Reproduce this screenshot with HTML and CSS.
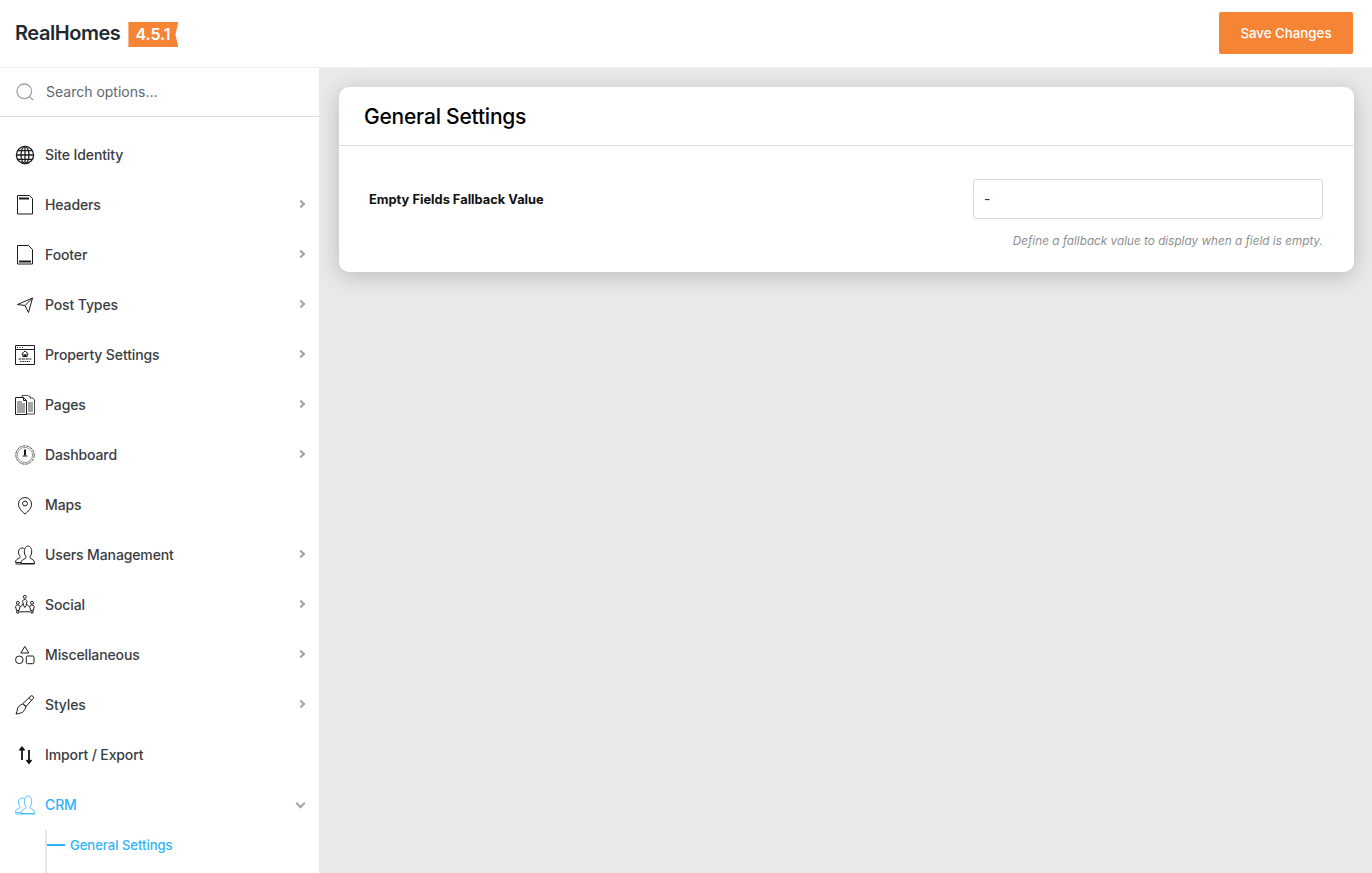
FILE: index.html
```html
<!DOCTYPE html>
<html lang="en">
<head>
<meta charset="utf-8">
<title>RealHomes Options</title>
<link rel="stylesheet" href="styles.css">
</head>
<body>
<header class="topbar">
  <div class="brand">
    <span class="brand-name">RealHomes</span>
    <span class="version">4.5.1</span>
  </div>
  <button class="save" type="button">Save Changes</button>
</header>
<div class="shell">
  <aside class="sidebar">
    <div class="search">
      <svg class="search-icon" viewBox="0 0 18 18"><circle cx="8.3" cy="8.3" r="7.3"/><path d="M13.6 13.6 17 17"/></svg>
      <span class="search-text">Search options...</span>
    </div>
    <nav class="menu">
      <a class="item"><svg class="ico globe" viewBox="0 0 20 20"><circle cx="10" cy="10" r="8.6"/><ellipse cx="10" cy="10" rx="4" ry="8.6"/><path d="M10 1.400v17.200M1.400 10h17.200M2.600 5.600h14.800M2.600 14.400h14.800"/></svg><span>Site Identity</span></a>
      <a class="item"><svg class="ico" viewBox="0 0 20 20"><path d="M2.500 .5h12l3 3v15.500h-15z"/><path class="thick" d="M4 3.500h10"/></svg><span>Headers</span><i class="chev"></i></a>
      <a class="item"><svg class="ico" viewBox="0 0 20 20"><path d="M2.500 .5h11l4 4v14.500h-15z"/><path class="thick" d="M4 16.500h12"/></svg><span>Footer</span><i class="chev"></i></a>
      <a class="item"><svg class="ico" viewBox="0 0 20 20"><path d="M2.500 9.500 17.500 3l-4 14.500-3.500-7zM10 10.500 17.500 3"/></svg><span>Post Types</span><i class="chev"></i></a>
      <a class="item"><svg class="ico" viewBox="0 0 20 20"><path d="M.5 .5h19v19H.5zM.5 4.500h19"/><path d="M2 2.500h1M4.500 2.500h1M7 2.500h1"/><path d="M10 6 6.800 8.800h1v2.700h4.400V8.800h1z"/><path class="thick" d="M8.500 10.300h3"/><path d="M3.500 14h13" stroke-dasharray="3 .6"/><path d="M5 16.500h10" stroke-dasharray="1.500 .8"/></svg><span>Property Settings</span><i class="chev"></i></a>
      <a class="item"><svg class="ico" viewBox="0 0 20 20"><path d="M7 2.500V.5h6l2 2M15 .5V3h3l1.500 2v14H8v-1.500" class="thin"/><path d="M.5 2.500h8l3 3v14H.5z" fill="#fff"/><path d="M8.500 2.500v3h3"/><path class="thin" d="M2 7h5M2 9h8M2 11h8M2 13h8M2 15h8M2 17h8M13 8h5M13 10h5M13 12h5M13 14h5M13 16h5"/></svg><span>Pages</span><i class="chev"></i></a>
      <a class="item"><svg class="ico" viewBox="0 0 20 20"><circle cx="10" cy="10" r="9.200" stroke-dasharray="3 .7" stroke="#555"/><circle cx="10" cy="10" r="7.600" stroke-opacity=".45"/><path class="thick" d="M10 4.500v6"/><path d="M7.500 11h5"/></svg><span>Dashboard</span><i class="chev"></i></a>
      <a class="item"><svg class="ico" viewBox="0 0 20 20"><path d="M10 19c-3-2.500-6.500-5.500-6.500-10a6.500 6.500 0 0 1 13 0c0 4.500-3.500 7.500-6.500 10z"/><circle cx="10" cy="8.500" r="2.400"/></svg><span>Maps</span></a>
      <a class="item"><svg class="ico wide" viewBox="0 0 20 20"><path d="M6 17.500H.5c0-3 2.200-3.500 4-4.500.9-.5.800-1.500.2-2.200C3.800 9.800 3.500 8.500 3.500 7 3.500 4.500 5 3 7.200 3c1 0 1.800.3 2.400.9"/><path d="M19.500 19H.5M19.500 18.500H6c0-3.500 2.500-4.200 4.300-5 1-.5.900-1.600.3-2.500-.9-1-1.300-2.500-1.300-4C9.300 3.500 10.800 1 13 1s3.700 2.500 3.700 6c0 1.500-.4 3-1.300 4-.6.900-.7 2 .3 2.500 1.800.8 3.800 1.500 3.800 5z"/></svg><span>Users Management</span><i class="chev"></i></a>
      <a class="item"><svg class="ico wide" viewBox="0 0 20 20"><circle cx="9.800" cy="1.800" r="1.500"/><path d="M9.800 4.500c-1.300 0-2.200.8-2.200 2l1 4 1.200 2 1.200-2 1-4c0-1.200-.9-2-2.200-2z"/><circle cx="2.800" cy="7.800" r="1.500"/><circle cx="17" cy="7.800" r="1.500"/><path d="M2.800 10c-1.300 0-2.200.8-2.200 2l1 3.500h2.400l1-3.500c0-1.200-.9-2-2.200-2zM17 10c-1.300 0-2.200.8-2.200 2l1 3.500h2.400l1-3.500c0-1.200-.9-2-2.200-2z"/><path d="M1.800 15.500v2.500h2v-2.500M16 15.500v2.500h2v-2.500M4.500 16.800h10.500M5.500 12l2.500-3M14.500 12 11.500 9"/></svg><span>Social</span><i class="chev"></i></a>
      <a class="item"><svg class="ico wide" viewBox="0 0 20 20"><path d="M9.800 1.500 13.800 8H5.800z"/><circle cx="4.300" cy="14.800" r="3.800"/><rect x="11.300" y="11" width="7.700" height="7.700" rx="1.200"/></svg><span>Miscellaneous</span><i class="chev"></i></a>
      <a class="item"><svg class="ico wide" viewBox="0 0 20 20"><path d="M8 8.500 16 .8c1-.6 3.200 1 2.500 2.300L11 11.500z"/><path d="M7.500 9c-2.500 1-4.500 2.500-5 5-.3 1.500-.8 3.500-1.500 5 3-.4 6.500-1 8-3.200.8-1.200 1.800-2.900 2-4.300z"/><path d="M14 2.800l2.500 2.500"/></svg><span>Styles</span><i class="chev"></i></a>
      <a class="item"><svg class="ico bold" viewBox="0 0 20 20"><path d="M7 15V2.500M4.500 5.500 7 2.500l2.500 3M14 5v13M11.500 15l2.500 3 2.500-3"/></svg><span>Import / Export</span></a>
      <a class="item active"><svg class="ico wide" viewBox="0 0 20 20"><path d="M6 17.500H.5c0-3 2.200-3.500 4-4.500.9-.5.800-1.500.2-2.200C3.800 9.800 3.500 8.500 3.500 7 3.500 4.500 5 3 7.200 3c1 0 1.800.3 2.400.9"/><path d="M19.500 19H.5M19.500 18.500H6c0-3.500 2.500-4.200 4.300-5 1-.5.900-1.600.3-2.500-.9-1-1.300-2.500-1.300-4C9.300 3.500 10.800 1 13 1s3.700 2.500 3.700 6c0 1.500-.4 3-1.300 4-.6.900-.7 2 .3 2.500 1.800.8 3.800 1.500 3.800 5z"/></svg><span>CRM</span><i class="chev down"></i></a>
      <div class="submenu"><a class="subitem"><i class="dash"></i><span>General Settings</span></a></div>
    </nav>
  </aside>
  <main class="content">
    <section class="card">
      <h1 class="card-title">General Settings</h1>
      <div class="field">
        <label class="field-label">Empty Fields Fallback Value</label>
        <div class="field-control">
          <div class="input">-</div>
          <p class="desc">Define a fallback value to display when a field is empty.</p>
        </div>
      </div>
    </section>
  </main>
</div>
</body>
</html>
```
FILE: styles.css
```css
* { box-sizing: border-box; }
html, body { height: 100%; }
body {
  margin: 0;
  height: 873px;
  overflow: hidden;
  font-family: Inter, "Liberation Sans", sans-serif;
  background: #e9e9e9;
  color: #32373c;
  display: flex;
  flex-direction: column;
}
.topbar {
  height: 68px;
  flex: none;
  background: #fff;
  border-bottom: 1px solid #f0f0f0;
  display: flex;
  align-items: center;
  justify-content: space-between;
  padding: 0 19px 2px 15px;
}
.brand { display: flex; align-items: center; gap: 8px; }
.brand-name { font-size: 20px; font-weight: 600; color: #1f2a33; letter-spacing: -.45px; }
.version {
  width: 50px;
  height: 25px;
  margin-top: 4px;
  padding-left: 7px;
  background: #f58534;
  color: #fff;
  font-size: 16px;
  font-weight: 600;
  letter-spacing: -.05px;
  line-height: 25px;
  clip-path: polygon(0 0, 100% 0, 94% 50%, 100% 100%, 0 100%);
}
.save {
  width: 134px;
  height: 42px;
  border: 0;
  border-radius: 2px;
  background: #f58534;
  color: #fff;
  font: 500 13.300px Inter, "Liberation Sans", sans-serif;
}
.shell { flex: 1; display: flex; min-height: 0; }
.sidebar { width: 319px; flex: none; background: #fff; overflow: hidden; }
.search {
  height: 49px;
  border-bottom: 1px solid #dfdfdf;
  display: flex;
  align-items: center;
  gap: 12px;
  padding: 0 0 2px 16px;
}
.search-icon { width: 18px; height: 18px; margin-top: 2px; fill: none; stroke: #a0a0a0; stroke-width: 1.300; }
.search-text { font-size: 14px; color: #5f6670; }
.menu { padding-top: 13px; }
.item {
  height: 50px;
  display: flex;
  align-items: center;
  padding: 0 13px 0 15px;
  font-size: 14px;
  font-weight: 500;
  letter-spacing: -.12px;
  color: #3a3d42;
}
.item span { margin: -2px 0 0 10px; }
.ico { width: 20px; height: 20px; flex: none; fill: none; stroke: #1c1c1c; stroke-width: 1; }
.ico .thick { stroke-width: 2; }
.ico .thin { stroke-width: .8; }
.ico.bold { stroke-width: 1.800; stroke: #111; }
.ico.globe { stroke-width: 1.300; }
.chev {
  margin-left: auto;
  width: 6px;
  height: 6px;
  margin-right: 2px;
  margin-top: -2px;
  border-top: 2px solid #a3a3a3;
  border-right: 2px solid #a3a3a3;
  transform: rotate(45deg);
}
.chev.down { transform: rotate(135deg); width: 7px; height: 7px; margin-top: -4px; margin-right: 2px; }
.active { color: #2fb2fb; }
.active .ico { stroke: #2fb2fb; stroke-width: .8; }
.submenu { margin-left: 45px; border-left: 2px solid #e6e6e6; height: 60px; }
.subitem {
  height: 30px;
  display: flex;
  align-items: center;
  gap: 5px;
  font-size: 13px;
  font-weight: 500;
  color: #2fb2fb;
}
.dash { width: 18px; height: 2px; background: #2fb2fb; }
.content { flex: 1; padding: 19px 18px 0 20px; }
.card {
  height: 185px;
  background: #fff;
  border-radius: 10px;
  box-shadow: 0 4px 22px rgba(0, 0, 0, .2);
}
.card-title {
  margin: 0;
  height: 59px;
  padding-left: 25px;
  border-bottom: 1px solid #dcdcdc;
  font-size: 21px;
  font-weight: 500;
  line-height: 60px;
  color: #000;
  letter-spacing: -.22px;
}
.field {
  display: flex;
  justify-content: space-between;
  padding: 33px 31px 0 30px;
}
.field-label { font-size: 12.850px; font-weight: 700; color: #111; line-height: 42px; height: 40px; }
.field-control { width: 350px; }
.input {
  height: 40px;
  border: 1px solid #d9d9d9;
  border-radius: 3px;
  padding-left: 10px;
  font-size: 14px;
  line-height: 38px;
  color: #333;
}
.desc {
  margin: 15px 0 0;
  text-align: right;
  font-size: 11.750px;
  font-style: italic;
  color: #8f8f8f;
}
```
